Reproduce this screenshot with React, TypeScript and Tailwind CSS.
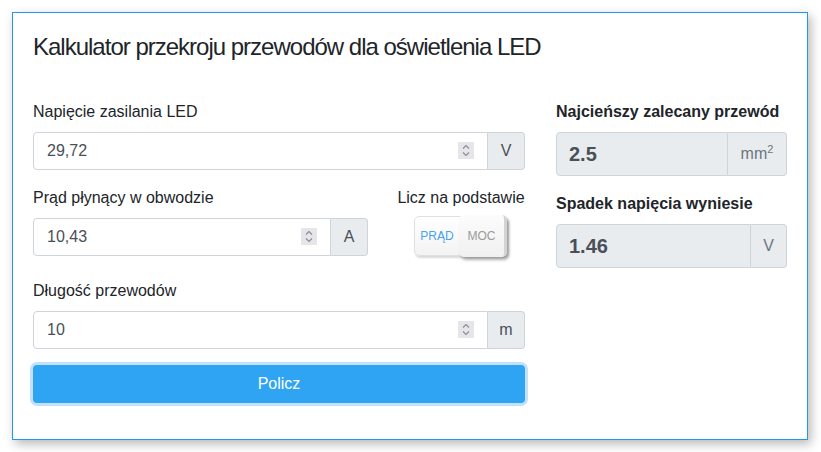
import React from 'react';

// Small up/down stepper drawn like the browser's number spinner
function Spinner() {
  return (
    <div className="flex h-[17px] w-[16px] items-center justify-center bg-[#e6e6ea]">
      <svg width="8" height="13" viewBox="0 0 8 13" fill="none" stroke="#8a8a90" strokeWidth="1.1">
        <path d="M1 4.5 L4 1.5 L7 4.5" />
        <path d="M1 8.5 L4 11.5 L7 8.5" />
      </svg>
    </div>
  );
}

function NumberField({ value, unit }: { value: string; unit: string }) {
  return (
    <div className="flex h-[38px] w-full">
      <div className="flex flex-1 items-center rounded-l-[4px] border border-[#ced4da] bg-white pl-[13px] pr-[13px]">
        <input
          readOnly
          value={value}
          className="min-w-0 flex-1 bg-transparent text-[16px] text-[#495057] outline-none"
        />
        <Spinner />
      </div>
      <div className="flex w-[37px] items-center justify-center rounded-r-[4px] border border-l-0 border-[#ced4da] bg-[#e9ecef] text-[16px] text-[#495057]">
        {unit}
      </div>
    </div>
  );
}

function ResultField({ value, unit, unitWidth }: { value: string; unit: React.ReactNode; unitWidth: string }) {
  return (
    <div className="flex h-[44px] w-full">
      <div className="flex flex-1 items-center rounded-l-[4px] border border-[#ced4da] bg-[#e9ecef] pl-[12px] text-[20px] font-bold text-[#495057]">
        {value}
      </div>
      <div
        className={`flex items-center justify-center rounded-r-[4px] border border-l-0 border-[#ced4da] bg-[#e9ecef] text-[16px] text-[#6c757d] ${unitWidth}`}
      >
        {unit}
      </div>
    </div>
  );
}

// Rocker switch: left half flat, right half raised
function ModeToggle() {
  return (
    <div className="mt-[6px] flex h-[40px] w-[94px] items-stretch rounded-[5px] border border-[#e0e0e0] bg-gradient-to-b from-white to-[#f3f3f3] text-[12px] shadow-[1px_2px_2px_rgba(0,0,0,0.15)]">
      <span className="flex w-[44px] items-center justify-center text-[#4aa3f0]">PRĄD</span>
      <span className="-my-[2px] flex flex-1 items-center justify-center rounded-[5px] border-r-[3px] border-r-[#d4d4d4] bg-gradient-to-b from-[#fcfcfc] to-[#f0f0f0] text-[#9a9a9a] shadow-[2px_3px_3px_rgba(0,0,0,0.3)]">
        MOC
      </span>
    </div>
  );
}

export default function App() {
  return (
    <div className="min-h-[452px] bg-white pl-[12px] pr-[13px] pt-[12px] font-['Liberation_Sans',Arial,sans-serif] text-[#212529]">
      <div className="w-[796px] border border-[#2196f3] bg-white px-[20px] pb-[36px] pt-[20px] shadow-[3px_4px_10px_rgba(0,0,0,0.28)]">
        <h1 className="text-[24px] leading-[1.2] tracking-[-1px]">Kalkulator przekroju przewodów dla oświetlenia LED</h1>

        <div className="mt-[38px] flex gap-[31px]">
          {/* input column */}
          <div className="flex w-[492px] flex-col">
            <label className="mb-[8px] text-[16px] leading-[24px]">Napięcie zasilania LED</label>
            <NumberField value="29,72" unit="V" />

            <div className="mt-[16px] flex gap-[29px]">
              <div className="flex w-[335px] flex-col">
                <label className="mb-[8px] text-[16px] leading-[24px]">Prąd płynący w obwodzie</label>
                <NumberField value="10,43" unit="A" />
              </div>
              <div className="flex flex-1 flex-col items-center">
                <span className="whitespace-nowrap text-[16px] leading-[24px]">Licz na podstawie</span>
                <ModeToggle />
              </div>
            </div>

            <label className="mb-[8px] mt-[23px] text-[16px] leading-[24px]">Długość przewodów</label>
            <NumberField value="10" unit="m" />

            <button className="mt-[16px] h-[38px] w-full rounded-[4px] bg-[#2fa4f2] text-[16px] text-white shadow-[0_0_0_3px_#c3e1fb]">
              Policz
            </button>
          </div>

          {/* result column */}
          <div className="flex w-[231px] flex-col">
            <label className="mb-[8px] text-[16px] font-bold leading-[24px]">Najcieńszy zalecany przewód</label>
            <ResultField
              value="2.5"
              unitWidth="w-[59px]"
              unit={
                <span>
                  mm<sup className="text-[11px]">2</sup>
                </span>
              }
            />
            <label className="mb-[8px] mt-[16px] text-[16px] font-bold leading-[24px]">Spadek napięcia wyniesie</label>
            <ResultField value="1.46" unit="V" unitWidth="w-[36px]" />
          </div>
        </div>
      </div>
    </div>
  );
}
